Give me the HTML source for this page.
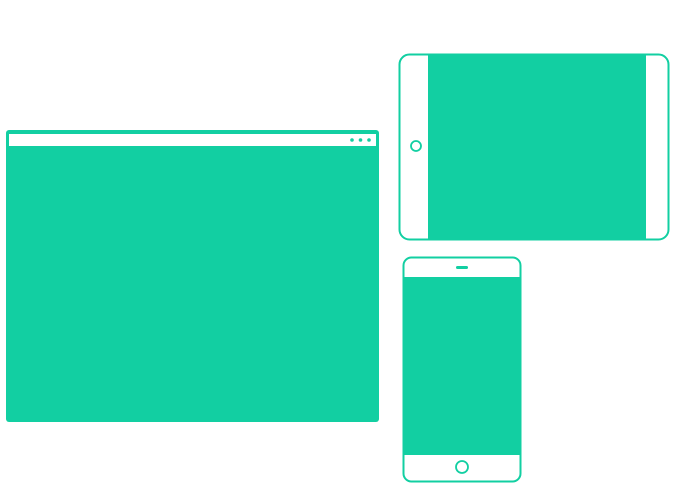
<!DOCTYPE html>
<html><head><meta charset="utf-8"><style>
html,body{margin:0;padding:0;background:#fff;width:676px;height:498px;overflow:hidden}
</style></head><body>
<svg width="676" height="498" viewBox="0 0 676 498" xmlns="http://www.w3.org/2000/svg">
<g fill="#12cfa2">
<!-- browser -->
<rect x="6" y="130" width="373" height="292" rx="3"/>
<rect x="9" y="134" width="367" height="12" fill="#fff"/>
<circle cx="352" cy="140" r="1.8"/>
<circle cx="360.5" cy="140" r="1.8"/>
<circle cx="369" cy="140" r="1.8"/>
<!-- tablet -->
<rect x="399.5" y="54.5" width="269" height="185" rx="10" fill="#fff" stroke="#12cfa2" stroke-width="2"/>
<rect x="428" y="54" width="218" height="186"/>
<circle cx="416" cy="146" r="5" fill="#fff" stroke="#12cfa2" stroke-width="1.8"/>
<!-- phone -->
<rect x="403.5" y="257.5" width="117" height="224" rx="8" fill="#fff" stroke="#12cfa2" stroke-width="2"/>
<rect x="403" y="277" width="118" height="178"/>
<rect x="456" y="266" width="12" height="3" rx="1.5"/>
<circle cx="462" cy="467" r="6" fill="#fff" stroke="#12cfa2" stroke-width="1.8"/>
</g>
</svg>
</body></html>
